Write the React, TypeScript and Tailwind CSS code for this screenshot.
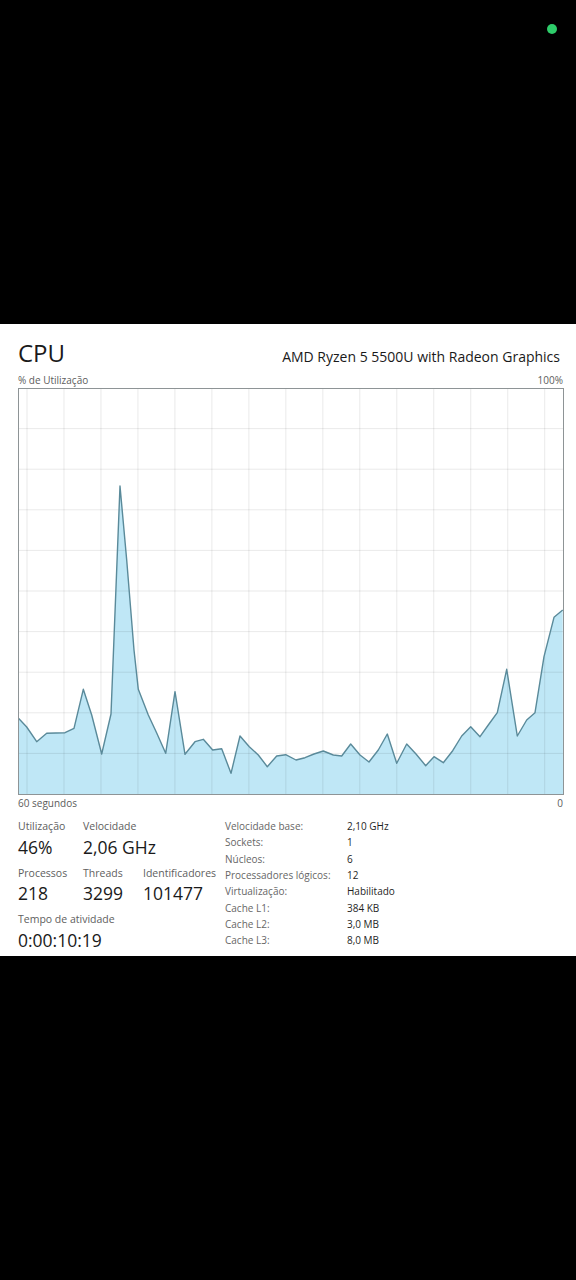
import React from "react";

const pts: [number, number][] = [
  [0, 329.7], [8.7, 339], [18.7, 353.7], [28.7, 345.3], [47, 344.7], [56, 340.3],
  [65.3, 301.3], [73.7, 327], [83.7, 366], [93, 326], [102, 98], [108.7, 172],
  [116, 262], [120.3, 301.3], [130.3, 327], [138.7, 345], [147.7, 365.3], [157, 303.7],
  [167, 366.3], [177, 353.7], [185.3, 351.3], [194.7, 362], [203.7, 360.7], [213, 385.3],
  [222, 348], [231.3, 358.7], [240.3, 367], [249.3, 378.7], [258.7, 368], [267.7, 366.7],
  [278, 372], [287, 369.7], [296, 366], [305.3, 363], [315.3, 367], [323.7, 368],
  [332.7, 356], [342, 367], [351, 374], [360.3, 362], [369.3, 346], [378.7, 375.3],
  [388.7, 356], [398, 366], [407.7, 377.7], [416, 368.7], [425.3, 374.7], [434.7, 362.7],
  [443.7, 348], [452.7, 338.7], [462, 348.7], [470.3, 337], [479.3, 324.7], [488.7, 281.3],
  [499.3, 348], [508.7, 332], [517, 324.7], [526, 268.7], [536, 229.3], [544.7, 222],
];

const W = 545;
const H = 406;

function Chart() {
  const line = pts.map((p) => p.join(",")).join(" ");
  const area = `${line} ${W},${H} 0,${H}`;
  const vx = Array.from({ length: 15 }, (_, k) => 9 + 36.98 * k);
  const hy = Array.from({ length: 9 }, (_, k) => 40.6 * (k + 1));
  return (
    <svg width={W + 1} height={H + 1} viewBox={`0 0 ${W + 1} ${H + 1}`} className="block">
      <rect x="0" y="0" width={W + 1} height={H + 1} fill="#ffffff" />
      <polygon points={area} fill="#bfe7f6" />
      {vx.map((x) => (
        <line key={"v" + x} x1={x} y1={0} x2={x} y2={H} stroke="rgba(0,0,0,0.085)" strokeWidth="1" />
      ))}
      {hy.map((y) => (
        <line key={"h" + y} x1={0} y1={y} x2={W} y2={y} stroke="rgba(0,0,0,0.085)" strokeWidth="1" />
      ))}
      <polyline points={line} fill="none" stroke="#5a8a9a" strokeWidth="1.4" strokeLinejoin="round" />
      <rect x="0.5" y="0.5" width={W} height={H} fill="none" stroke="#8e9496" strokeWidth="1" />
    </svg>
  );
}

const specs: [string, string][] = [
  ["Velocidade base:", "2,10 GHz"],
  ["Sockets:", "1"],
  ["Núcleos:", "6"],
  ["Processadores lógicos:", "12"],
  ["Virtualização:", "Habilitado"],
  ["Cache L1:", "384 KB"],
  ["Cache L2:", "3,0 MB"],
  ["Cache L3:", "8,0 MB"],
];

export default function App() {
  const font = { fontFamily: '"Open Sans", "Noto Sans", sans-serif' };
  return (
    <div className="min-h-[1280px] w-[576px] bg-black" style={font}>
      <div className="flex h-[324px] justify-end pr-[19px] pt-[24px]">
        <div className="h-[10px] w-[10px] rounded-full bg-[#2ecc6a]" />
      </div>
      <div className="h-[632px] bg-white pl-[18px] pr-[13px] pt-[17px]">
        <div className="flex items-baseline justify-between leading-none">
          <span className="text-[24px] text-[#1a1a1a]">CPU</span>
          <span className="mr-[3px] text-[14px] text-[#1a1a1a]">AMD Ryzen 5 5500U with Radeon Graphics</span>
        </div>
        <div className="mt-[10px] flex justify-between text-[10px] leading-none text-[#5c5c5c]">
          <span>% de Utilização</span>
          <span>100%</span>
        </div>
        <div className="mt-[3px]">
          <Chart />
        </div>
        <div className="mt-[3px] flex justify-between text-[10px] leading-none text-[#5c5c5c]">
          <span>60 segundos</span>
          <span>0</span>
        </div>
        <div className="mt-[10px] flex">
          <div className="w-[207px] shrink-0 pt-[3px]">
            <div className="grid grid-cols-[65px_60px_auto] whitespace-nowrap leading-none">
              <span className="text-[10.5px] text-[#5e5e5e]">Utilização</span>
              <span className="text-[10.5px] text-[#5e5e5e]">Velocidade</span>
              <span />
              <span className="mt-[7px] text-[17.5px] text-[#1a1a1a]">46%</span>
              <span className="mt-[7px] text-[17.5px] text-[#1a1a1a]">2,06 GHz</span>
              <span />
              <span className="mt-[11.5px] text-[10.5px] text-[#5e5e5e]">Processos</span>
              <span className="mt-[11.5px] text-[10.5px] text-[#5e5e5e]">Threads</span>
              <span className="mt-[11.5px] text-[10.5px] text-[#5e5e5e]">Identificadores</span>
              <span className="mt-[7px] text-[17.5px] text-[#1a1a1a]">218</span>
              <span className="mt-[7px] text-[17.5px] text-[#1a1a1a]">3299</span>
              <span className="mt-[7px] text-[17.5px] text-[#1a1a1a]">101477</span>
            </div>
            <div className="mt-[11.5px] text-[10.5px] leading-none text-[#5e5e5e]">Tempo de atividade</div>
            <div className="mt-[7px] whitespace-nowrap text-[17.5px] leading-none text-[#1a1a1a]">0:00:10:19</div>
          </div>
          <div className="flex flex-col">
            {specs.map(([k, v]) => (
              <div key={k} className="flex h-[16.3px] items-center whitespace-nowrap text-[10px] leading-none">
                <span className="w-[122px] text-[#666666]">{k}</span>
                <span className="text-[#1f1f1f]">{v}</span>
              </div>
            ))}
          </div>
        </div>
      </div>
    </div>
  );
}
